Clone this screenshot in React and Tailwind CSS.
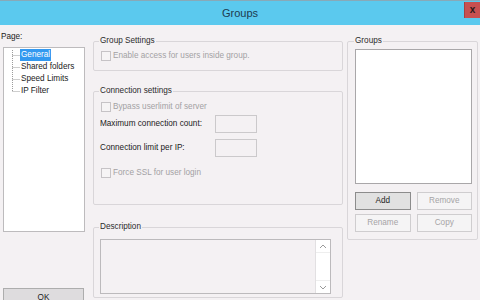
import React from 'react';

const Check = ({ label }) => (
  <div className="flex items-center h-[10px]">
    <span className="ml-[1px] w-[10px] h-[10px] border border-[#c6c3c6] bg-[#f6f4f5]" />
    <span className="ml-[2px] text-[#a3a1a3]">{label}</span>
  </div>
);

const Group = ({ title, className = '', children }) => (
  <fieldset className={`border border-[#d9d6d9] rounded-[2px] px-[6px] ${className}`}>
    <legend className="px-[1px] -ml-[1px] leading-[12px] text-[#2b2b2b]">{title}</legend>
    {children}
  </fieldset>
);

const Btn = ({ children, active }) => (
  <div
    className={`h-[18px] flex items-center justify-center border ${
      active
        ? 'bg-[#e1e1e1] border-[#8c8c8c] text-[#1e1e1e]'
        : 'bg-[#f5f4f5] border-[#cfcdcf] text-[#a6a4a6]'
    }`}
  >
    {children}
  </div>
);

const Chevron = ({ up }) => (
  <svg width="8" height="5" viewBox="0 0 8 5">
    <path
      d={up ? 'M1 4 L4 1 L7 4' : 'M1 1 L4 4 L7 1'}
      fill="none"
      stroke="#9a9a9a"
      strokeWidth="1"
    />
  </svg>
);

export default function App() {
  return (
    <div className="w-[480px] h-[300px] overflow-hidden bg-[#f4f1f3] font-['Liberation_Sans',Arial,sans-serif] text-[8.2px] text-[#222]">
      {/* title bar */}
      <div className="relative h-[25px] bg-[#5bc9ee] border-t border-[#88a9b8] flex items-center justify-center">
        <span className="text-[11px] text-[#1d3b50]">Groups</span>
        <div className="absolute right-0 top-[1px] w-[16px] h-[16px] bg-[#c75050] border-l border-[#a84040] flex items-center justify-center">
          <span className="text-[10px] font-bold text-[#2a1a1a] leading-none -mt-[1px]">x</span>
        </div>
      </div>

      <div className="flex">
        {/* left column: page tree */}
        <div className="w-[86px] flex flex-col">
          <div className="mt-[6px] pl-[1px] leading-[12px]">Page:</div>
          <div className="mt-[4px] ml-[3px] w-[82px] h-[185px] bg-white border border-[#bdbbbd] pt-[1px] flex">
            <svg width="16" height="48" className="shrink-0">
              <g stroke="#9c9c9c" strokeWidth="1" strokeDasharray="1 1">
                <line x1="8.5" y1="1" x2="8.5" y2="42" />
                <line x1="8.5" y1="6.5" x2="16" y2="6.5" />
                <line x1="8.5" y1="18.5" x2="16" y2="18.5" />
                <line x1="8.5" y1="30.5" x2="16" y2="30.5" />
                <line x1="8.5" y1="42.5" x2="16" y2="42.5" />
              </g>
            </svg>
            <div className="flex flex-col items-start leading-[12px]">
              <span className="px-[1px] bg-[#3399f0] text-white">General</span>
              <span className="px-[1px]">Shared folders</span>
              <span className="px-[1px]">Speed Limits</span>
              <span className="px-[1px]">IP Filter</span>
            </div>
          </div>
          <div className="mt-[56px] ml-[3px] w-[81px] h-[22px] bg-[#dedcde] border border-[#adadad] flex items-start justify-center pt-[3px]">
            OK
          </div>
        </div>

        {/* middle column */}
        <div className="ml-[7px] w-[250px] flex flex-col">
          <Group title="Group Settings" className="mt-[10px] pt-[4px] pb-[9px]">
            <Check label="Enable access for users inside group." />
          </Group>

          <Group title="Connection settings" className="mt-[14px] pt-[5px] pb-[26px]">
            <Check label="Bypass userlimit of server" />
            <div className="mt-[3px] flex items-center">
              <span className="w-[115px]">Maximum connection count:</span>
              <span className="w-[42px] h-[18px] border border-[#cbc9cb]" />
            </div>
            <div className="mt-[6px] flex items-center">
              <span className="w-[115px]">Connection limit per IP:</span>
              <span className="w-[42px] h-[18px] border border-[#cbc9cb]" />
            </div>
            <div className="mt-[11px]">
              <Check label="Force SSL for user login" />
            </div>
          </Group>

          <Group title="Description" className="mt-[16px] pt-[6px] pb-[3px]">
            <div className="w-[231px] h-[55px] border border-[#bcbabc] flex">
              <div className="flex-1" />
              <div className="w-[15px] bg-white border-l border-[#e2e0e2] flex flex-col justify-between">
                <div className="h-[13px] flex items-center justify-center border-b border-[#eeeeee]">
                  <Chevron up />
                </div>
                <div className="h-[13px] flex items-center justify-center border-t border-[#eeeeee]">
                  <Chevron />
                </div>
              </div>
            </div>
          </Group>
        </div>

        {/* right column */}
        <div className="ml-[4px] w-[131px]">
          <Group title="Groups" className="mt-[10px] pt-[2px] pb-[7px] pl-[7px] pr-[5px]">
            <div className="h-[135px] bg-white border border-[#a9a7a9]" />
            <div className="mt-[8px] grid grid-cols-2 gap-x-[6px] gap-y-[4px]">
              <Btn active>Add</Btn>
              <Btn>Remove</Btn>
              <Btn>Rename</Btn>
              <Btn>Copy</Btn>
            </div>
          </Group>
        </div>
      </div>
    </div>
  );
}
